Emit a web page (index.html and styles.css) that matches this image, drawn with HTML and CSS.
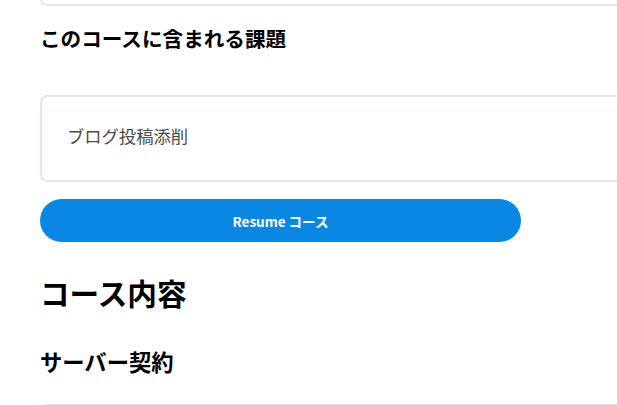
FILE: index.html
```html
<!DOCTYPE html>
<html>
<head>
  <title>コース</title>
  <link rel="stylesheet" href="styles.css">
</head>
<body>
  <div class="page">
    <div class="container">
      <div class="card card-top"></div>

      <h2 class="section-title">このコースに含まれる課題</h2>
      <div class="card task-card">
        <span class="task-name">ブログ投稿添削</span>
      </div>
      <button type="button" class="resume-button">Resume コース</button>

      <h1 class="course-title">コース内容</h1>
      <h3 class="chapter-title">サーバー契約</h3>
      <div class="card card-bottom"></div>
    </div>
  </div>
</body>
</html>
```

FILE: styles.css
```css
* {
  box-sizing: border-box;
  font-family: "Noto Sans CJK JP", "Noto Sans", sans-serif;
}
body {
  margin: 0;
  background-color: white;
}
.page {
  height: 100vh;
  overflow: hidden;
}
.container {
  padding-left: 40px;
  margin-right: -40px;
}
.card {
  border: 2px solid #e2e7ef;
  border-radius: 7px;
  background-color: white;
}
.card-top {
  height: 60px;
  margin-top: -54px;
}
.section-title {
  font-size: 20.6px;
  font-weight: bold;
  line-height: 28px;
  margin: 18px 0 0;
  color: #000;
}
.task-card {
  display: flex;
  align-items: center;
  height: 87px;
  margin-top: 43px;
  padding-left: 25px;
  padding-bottom: 5px;
}
.task-name {
  font-size: 17.3px;
  color: #4b4b4b;
  line-height: 24px;
}
.resume-button {
  display: block;
  width: 481px;
  height: 43px;
  margin-top: 17px;
  border: none;
  border-radius: 22px;
  background-color: #0a86e3;
  color: white;
  font-size: 13.5px;
  font-weight: bold;
  cursor: pointer;
}
.course-title {
  font-size: 29.6px;
  font-weight: bold;
  line-height: 36px;
  margin: 33px 0 0;
  color: #000;
}
.chapter-title {
  font-size: 22.3px;
  font-weight: bold;
  line-height: 30px;
  margin: 35px 0 0;
  color: #000;
}
.card-bottom {
  height: 80px;
  margin-top: 28px;
}
```
